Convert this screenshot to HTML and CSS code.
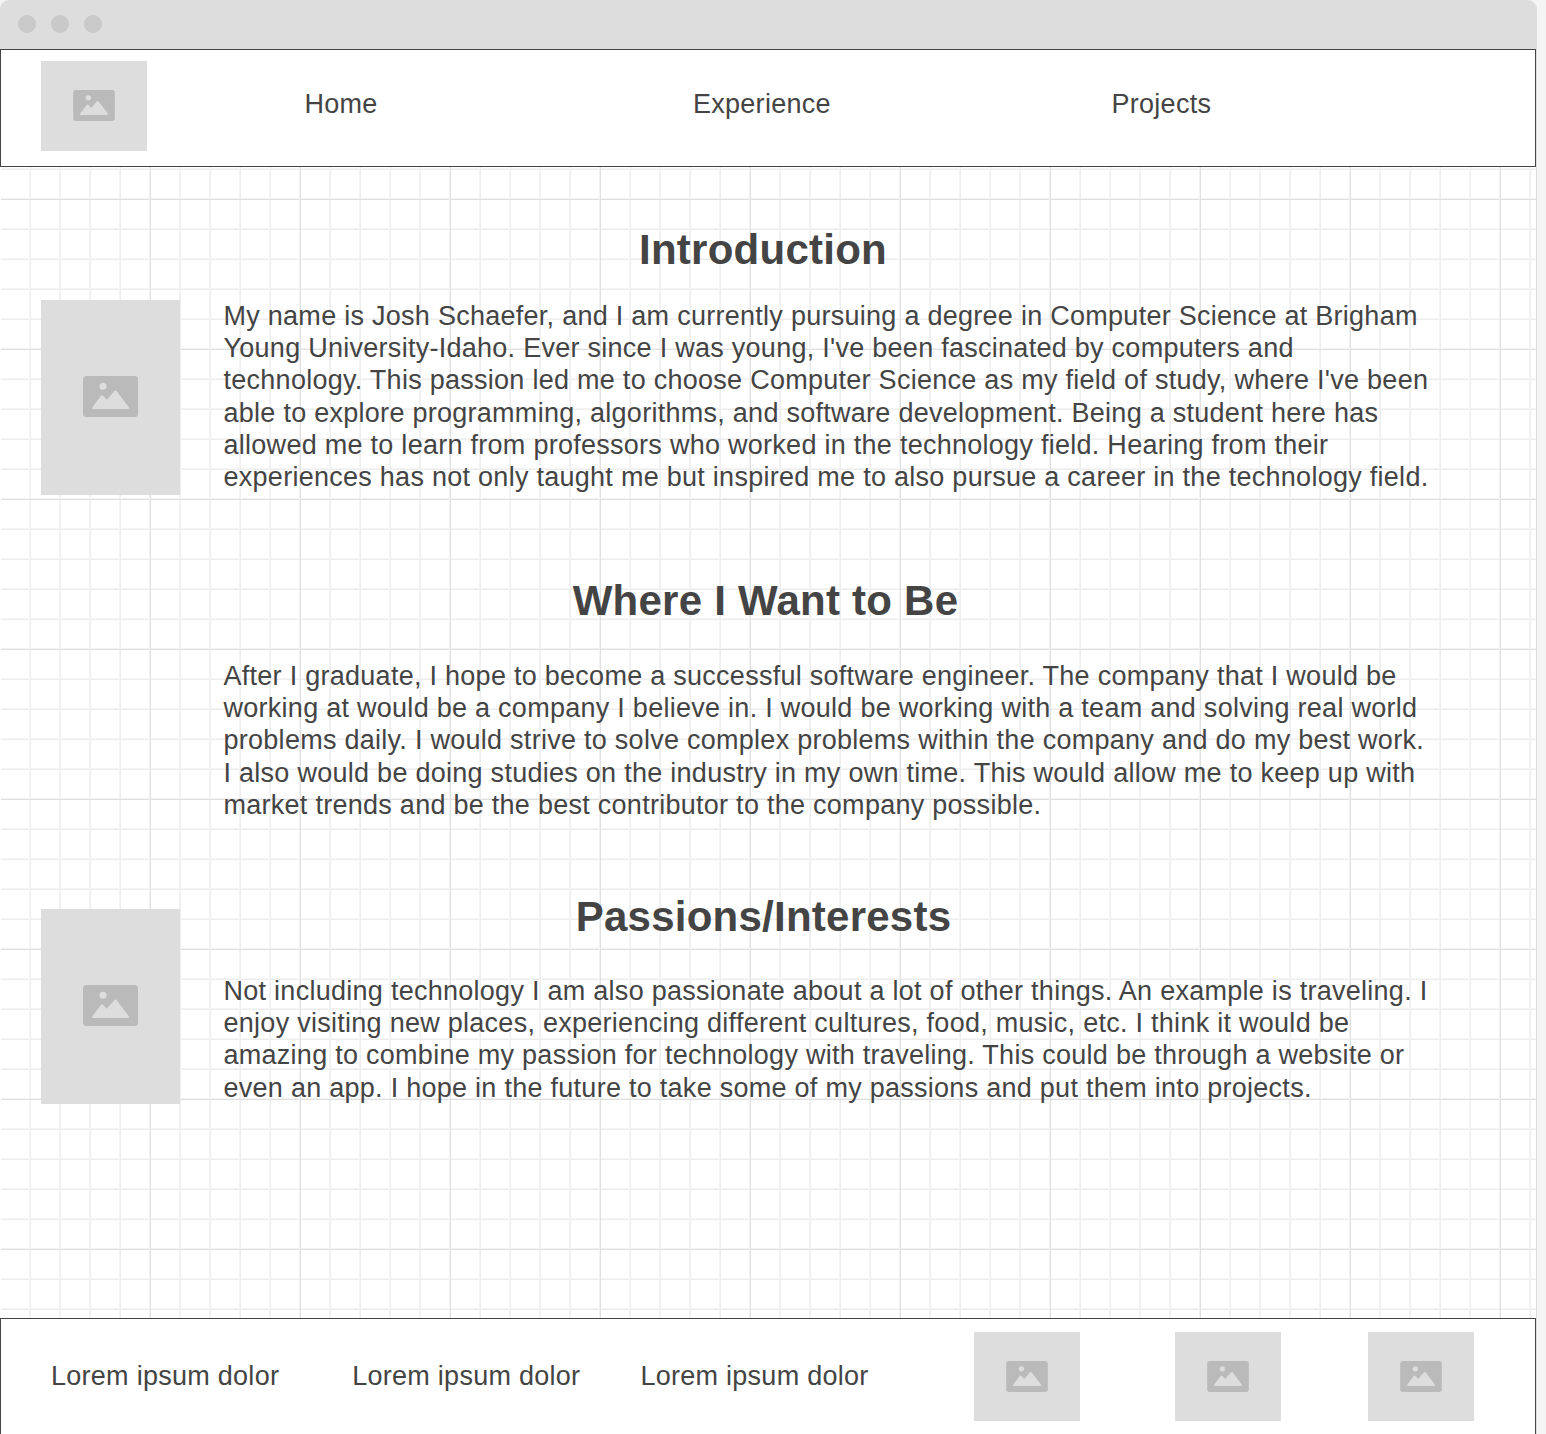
FILE: index.html
```html
<!DOCTYPE html>
<html lang="en">
<head>
<meta charset="utf-8">
<title>Josh Schaefer</title>
<link rel="stylesheet" href="styles.css">
</head>
<body>
<svg class="defs" aria-hidden="true">
  <symbol id="picture" viewBox="0 0 55 41">
    <rect width="55" height="41" rx="3.5" fill="#bababa"/>
    <circle cx="20" cy="10.3" r="3.5" fill="#ddd"/>
    <path d="M10 33Q8.500 33 9.300 31.200L17.800 20Q19 18.400 20.200 20L23.800 23.800L31.200 15.200Q32.500 14 33.800 15.200L45.800 31.200Q46.500 33 45 33Z" fill="#ddd"/>
  </symbol>
</svg>
<div class="window">
  <div class="titlebar"><i class="dot"></i><i class="dot"></i><i class="dot"></i></div>
  <header class="header">
    <div class="thumb logo"><svg class="icon-small"><use href="#picture"/></svg></div>
    <nav class="nav"><a class="home">Home</a><a class="experience">Experience</a><a>Projects</a></nav>
  </header>
  <main class="content">
    <section class="section intro">
      <div class="portrait"><svg class="icon-large"><use href="#picture"/></svg></div>
      <div class="copy">
        <h1 class="title">Introduction</h1>
        <p class="text">My name is Josh Schaefer, and I am currently pursuing a degree in Computer Science at Brigham<br>Young University-Idaho. Ever since I was young, I've been fascinated by computers and<br>technology. This passion led me to choose Computer Science as my field of study, where I've been<br>able to explore programming, algorithms, and software development. Being a student here has<br>allowed me to learn from professors who worked in the technology field. Hearing from their<br>experiences has not only taught me but inspired me to also pursue a career in the technology field.</p>
      </div>
    </section>
    <section class="section goals">
      <div class="copy">
        <h1 class="title">Where I Want to Be</h1>
        <p class="text">After I graduate, I hope to become a successful software engineer. The company that I would be<br>working at would be a company I believe in. I would be working with a team and solving real world<br>problems daily. I would strive to solve complex problems within the company and do my best work.<br>I also would be doing studies on the industry in my own time. This would allow me to keep up with<br>market trends and be the best contributor to the company possible.</p>
      </div>
    </section>
    <section class="section passions">
      <div class="portrait"><svg class="icon-large"><use href="#picture"/></svg></div>
      <div class="copy">
        <h1 class="title">Passions/Interests</h1>
        <p class="text">Not including technology I am also passionate about a lot of other things. An example is traveling. I<br>enjoy visiting new places, experiencing different cultures, food, music, etc. I think it would be<br>amazing to combine my passion for technology with traveling. This could be through a website or<br>even an app. I hope in the future to take some of my passions and put them into projects.</p>
      </div>
    </section>
  </main>
  <footer class="footer">
    <div class="links"><span>Lorem ipsum dolor</span><span class="second">Lorem ipsum dolor</span><span class="third">Lorem ipsum dolor</span></div>
    <div class="thumbs">
      <div class="thumb"><svg class="icon-small"><use href="#picture"/></svg></div>
      <div class="thumb middle"><svg class="icon-small"><use href="#picture"/></svg></div>
      <div class="thumb last"><svg class="icon-small"><use href="#picture"/></svg></div>
    </div>
  </footer>
</div>
</body>
</html>
```

FILE: styles.css
```css
* { box-sizing: border-box; }
body {
  margin: 0;
  height: 1434px;
  overflow: hidden;
  background: #f4f4f4;
  color: #444;
  font: 27px/32.25px "Liberation Sans", Arial, sans-serif;
  letter-spacing: .27px;
  white-space: nowrap;
}
.defs { display: none; }
.window {
  display: flex;
  flex-direction: column;
  width: 1537px;
  height: 1434px;
  border-radius: 9px 9px 0 0;
  border-right: 1px solid #ddd;
  background: #fff;
  overflow: hidden;
}
.titlebar {
  display: flex;
  align-items: center;
  gap: 15px;
  height: 49px;
  padding: 0 0 1px 18px;
  margin-right: -1px;
  background: #ddd;
}
.dot { width: 18px; height: 18px; border-radius: 50%; background: #c9c9c9; }
.header {
  display: flex;
  height: 118px;
  padding: 11px 0 0 40px;
  border: 1px solid #444;
  background: #fff;
}
.thumb {
  display: flex;
  align-items: center;
  justify-content: center;
  width: 106px;
  height: 89px;
  background: #ddd;
}
.logo { height: 90px; padding-bottom: 1px; }
.icon-small { width: 42px; height: 31px; }
.icon-large { width: 55px; height: 41px; margin-bottom: 2px; }
.nav { display: flex; padding: 27px 0 0 157.500px; }
.home { width: 388.500px; }
.experience { width: 418.500px; }
.content {
  height: 1151px;
  box-shadow: inset 1px 0 #fff;
  background-image:
    linear-gradient(90deg, #fff 1px, transparent 1px),
    linear-gradient(90deg, #f2f2f2 1px, #e0e0e0 1px, #e0e0e0 2px, transparent 2px),
    linear-gradient(#f2f2f2 1px, #e0e0e0 1px, #e0e0e0 2px, transparent 2px),
    linear-gradient(90deg, #f4f4f4 1px, #eee 1px, #eee 2px, transparent 2px),
    linear-gradient(#f4f4f4 1px, #eee 1px, #eee 2px, transparent 2px);
  background-size: 100% 100%, 150px 150px, 150px 150px, 30px 30px, 30px 30px;
  background-position: 0 0, 149px 0, 0 31px, 29px 0, 0 1px;
}
.titlebar, .header, .content, .footer { flex-shrink: 0; }
.section { display: flex; padding-left: 41px; }
.portrait {
  display: flex;
  align-items: center;
  justify-content: center;
  width: 139px;
  height: 195px;
  margin-right: 43.500px;
  background: #ddd;
}
.intro { height: 392px; padding-top: 57px; }
.intro .portrait { margin-top: 76px; }
.goals { height: 325px; padding: 17px 0 0 223.500px; }
.passions { padding-top: 7px; }
.passions .portrait { margin-top: 18px; }
.title {
  width: 1079px;
  margin: 0;
  font-size: 42px;
  line-height: 50px;
  letter-spacing: .25px;
  text-align: center;
}
.intro .title, .passions .title { padding-top: 1px; }
.goals .title { width: 1084px; }
.passions .title { width: 1080px; }
.text { margin: 24.850px 0 0; }
.goals .text { margin-top: 33.850px; }
.passions .text { margin-top: 32.850px; }
.footer {
  display: flex;
  height: 116px;
  padding: 13px 0 0 50px;
  border: 1px solid #444;
  border-bottom: 0;
  background: #fff;
}
.links { display: flex; width: 923px; padding-top: 28px; }
.second { margin-left: 73px; }
.third { margin-left: 60px; }
.thumbs { display: flex; }
.middle { margin-left: 95px; }
.last { margin-left: 87px; }
```
